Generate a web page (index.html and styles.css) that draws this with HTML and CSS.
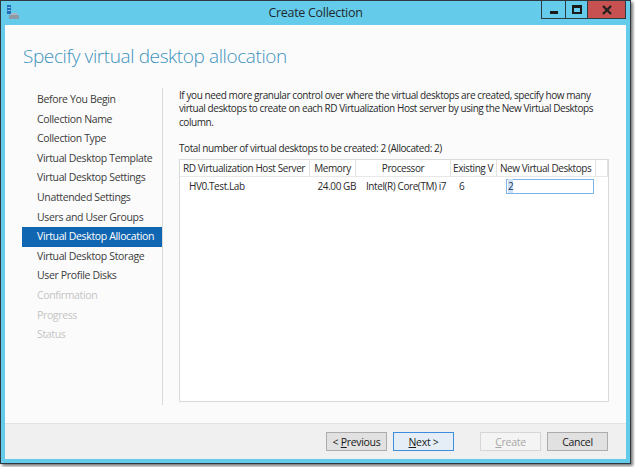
FILE: index.html
```html
<!DOCTYPE html>
<html>
<head>
<meta charset="utf-8">
<link rel="stylesheet" href="styles.css">
</head>
<body>
<div class="window">
  <div class="titlebar">
    <div class="app-icon">
      <svg width="14" height="14" viewBox="0 0 14 14">
        <rect x="1" y="0" width="4" height="9" fill="#1f6fb8"/>
        <rect x="1.5" y="2" width="3" height="1" fill="#8fc3ec"/>
        <rect x="1.5" y="5" width="3" height="1" fill="#8fc3ec"/>
        <rect x="3" y="10" width="10" height="4" fill="#8d9aa6"/>
        <rect x="5" y="8" width="6" height="2" fill="#a9b4be"/>
      </svg>
    </div>
    <div class="title">Create Collection</div>
    <div class="caption-buttons">
      <div class="cbtn cmin"><span class="min-bar"></span></div>
      <div class="cbtn cmax"><span class="max-box"></span></div>
      <div class="cbtn cclose">
        <svg width="12" height="10" viewBox="0 0 12 10"><path d="M2 1 L10 9 M10 1 L2 9" stroke="#222" stroke-width="2.4" fill="none"/></svg>
      </div>
    </div>
  </div>
  <div class="client">
    <h1 class="heading">Specify virtual desktop allocation</h1>
    <div class="main">
      <ul class="nav">
        <li>Before You Begin</li>
        <li>Collection Name</li>
        <li>Collection Type</li>
        <li>Virtual Desktop Template</li>
        <li>Virtual Desktop Settings</li>
        <li>Unattended Settings</li>
        <li>Users and User Groups</li>
        <li class="active">Virtual Desktop Allocation</li>
        <li>Virtual Desktop Storage</li>
        <li>User Profile Disks</li>
        <li class="disabled">Confirmation</li>
        <li class="disabled">Progress</li>
        <li class="disabled">Status</li>
      </ul>
      <div class="content">
        <p class="intro">If you need more granular control over where the virtual desktops are created, specify how many<br>virtual desktops to create on each RD Virtualization Host server by using the New Virtual Desktops<br>column.</p>
        <p class="total">Total number of virtual desktops to be created: 2 (Allocated: 2)</p>
        <div class="grid">
          <div class="grid-head">
            <div class="c c1">RD Virtualization Host Server</div>
            <div class="c c2">Memory</div>
            <div class="c c3">Processor</div>
            <div class="c c4">Existing V</div>
            <div class="c c5">New Virtual Desktops</div>
            <div class="c c6"></div>
          </div>
          <div class="grid-row">
            <div class="c c1 host">HV0.Test.Lab</div>
            <div class="c c2 mem">24.00 GB</div>
            <div class="c c3 proc">Intel(R) Core(TM) i7</div>
            <div class="c c4 exist">6</div>
            <div class="c c5"><div class="input"><span class="sel">2</span></div></div>
          </div>
        </div>
      </div>
    </div>
    <div class="footer">
      <button class="btn"><span>&lt; <u>P</u>revious</span></button>
      <button class="btn focus"><span><u>N</u>ext &gt;</span></button>
      <button class="btn disabled gap"><span><u>C</u>reate</span></button>
      <button class="btn"><span>Cancel</span></button>
    </div>
  </div>
</div>
</body>
</html>
```

FILE: styles.css
```css
html, body {
  margin: 0;
  padding: 0;
  background: #ffffff;
}
body {
  width: 635px;
  height: 467px;
  overflow: hidden;
  font-family: "Open Sans", "Noto Sans", sans-serif;
}
.window {
  box-sizing: border-box;
  width: 631px;
  height: 464px;
  border: 1px solid #2e3a40;
  background: #65cbea;
  padding: 0 4px 4px 4px;
  display: flex;
  flex-direction: column;
  box-shadow: 2px 2px 3px rgba(0,0,0,0.55);
}
.titlebar {
  height: 24px;
  display: grid;
  grid-template-columns: 1fr auto 1fr;
  align-items: start;
}
.app-icon {
  padding: 4px 0 0 1px;
  height: 14px;
}
.app-icon svg { display: block; }
.title {
  font-size: 12.5px;
  letter-spacing: -0.3px;
  color: #1e2a30;
  line-height: 24px;
}
.caption-buttons {
  justify-self: end;
  display: flex;
}
.cbtn {
  box-sizing: border-box;
  height: 18px;
  border: 1px solid #2d3b42;
  border-top: none;
  display: flex;
  align-items: center;
  justify-content: center;
  background: #65cbea;
}
.cmin { width: 25px; }
.cmax { width: 22px; border-left: none; }
.cclose { width: 38px; border-left: none; background: #c75050; }
.min-bar {
  display: block;
  width: 8px;
  height: 3px;
  background: #1a1a1a;
  margin-top: 6px;
}
.max-box {
  display: block;
  box-sizing: border-box;
  width: 10px;
  height: 9px;
  border: 2px solid #1a1a1a;
  border-top-width: 3px;
}
.client {
  flex: 1;
  background: #fbfbfb;
  display: flex;
  flex-direction: column;
}
.heading {
  margin: 0;
  padding: 17px 0 0 18px;
  height: 46px;
  font-weight: 300;
  font-size: 19px;
  line-height: 28px;
  color: #3d93bd;
  letter-spacing: -0.4px;
}
.main {
  display: flex;
  height: 317px;
}
.nav {
  list-style: none;
  margin: 0;
  padding: 2px 0 0 17px;
  width: 140px;
  border-right: 1px solid #d9d9d9;
  font-size: 10.5px;
  letter-spacing: -0.35px;
}
.nav li {
  height: 19.6px;
  line-height: 19.6px;
  padding-left: 15px;
  color: #3c3c3c;
  white-space: nowrap;
}
.nav li.active {
  background: #1166b1;
  color: #ffffff;
}
.nav li.disabled {
  color: #c4c4c4;
}
.content {
  padding-left: 16px;
  width: 430px;
  font-size: 10px;
  color: #2a2a2a;
  letter-spacing: -0.42px;
}
.intro {
  margin: 0;
  padding-top: 1px;
  line-height: 13.3px;
  white-space: nowrap;
}
.total {
  margin: 13px 0 0 0;
  line-height: 13.3px;
}
.grid {
  margin-top: 4px;
  box-sizing: border-box;
  width: 430px;
  height: 243px;
  border: 1px solid #dadada;
  background: #ffffff;
}
.grid-head, .grid-row {
  display: flex;
  white-space: nowrap;
}
.grid-head {
  height: 17px;
  line-height: 17px;
}
.grid-head .c {
  border-right: 1px solid #e2e2e2;
  border-bottom: 1px solid #e8e8e8;
  box-sizing: border-box;
  height: 17px;
  padding-left: 3px;
  overflow: hidden;
}
.c1 { width: 130px; }
.c2 { width: 46px; text-align: center; }
.c3 { width: 95px; text-align: center; }
.c4 { width: 46px; }
.c5 { width: 99px; }
.c6 { width: 12px; }
.grid-head .c2, .grid-head .c3 { padding-left: 0; }
.grid-head .c4 { padding-left: 2px; }
.grid-head .c5 { padding-left: 3px; }
.grid-row {
  height: 18px;
  line-height: 18px;
  align-items: center;
}
.grid-row .c { box-sizing: border-box; }
.host { padding-left: 9px; }
.mem { text-align: right; }
.proc { text-align: left; padding-left: 10px; }
.exist { padding-left: 8px; }
.grid-row .c5 { padding-left: 9px; }
.input {
  box-sizing: border-box;
  width: 88px;
  height: 15px;
  border: 1px solid #7eb4ea;
  background: #ffffff;
  line-height: 13px;
  padding-left: 1px;
}
.sel {
  background: #cde3f8;
  color: #1c2f55;
}
.footer {
  margin-top: auto;
  height: 36px;
  box-sizing: border-box;
  border-top: 1px solid #e2e2e2;
  background: #f0f0f0;
  display: flex;
  justify-content: flex-end;
  align-items: flex-start;
  padding: 8px 18px 0 0;
  gap: 6px;
}
.btn {
  box-sizing: border-box;
  width: 61px;
  height: 19px;
  border: 1px solid #acacac;
  background: #e1e1e1;
  font-family: "Open Sans", "Noto Sans", sans-serif;
  font-size: 10.5px;
  color: #1a1a1a;
  padding: 0;
  line-height: 16px;
  letter-spacing: -0.3px;
}
.btn.focus {
  border-color: #3c8ddb;
  background: #e5eef7;
}
.btn.disabled {
  border-color: #d6d6d6;
  background: #f4f4f4;
  color: #a8a8a8;
}
.btn.gap { margin-left: 20px; }
```
